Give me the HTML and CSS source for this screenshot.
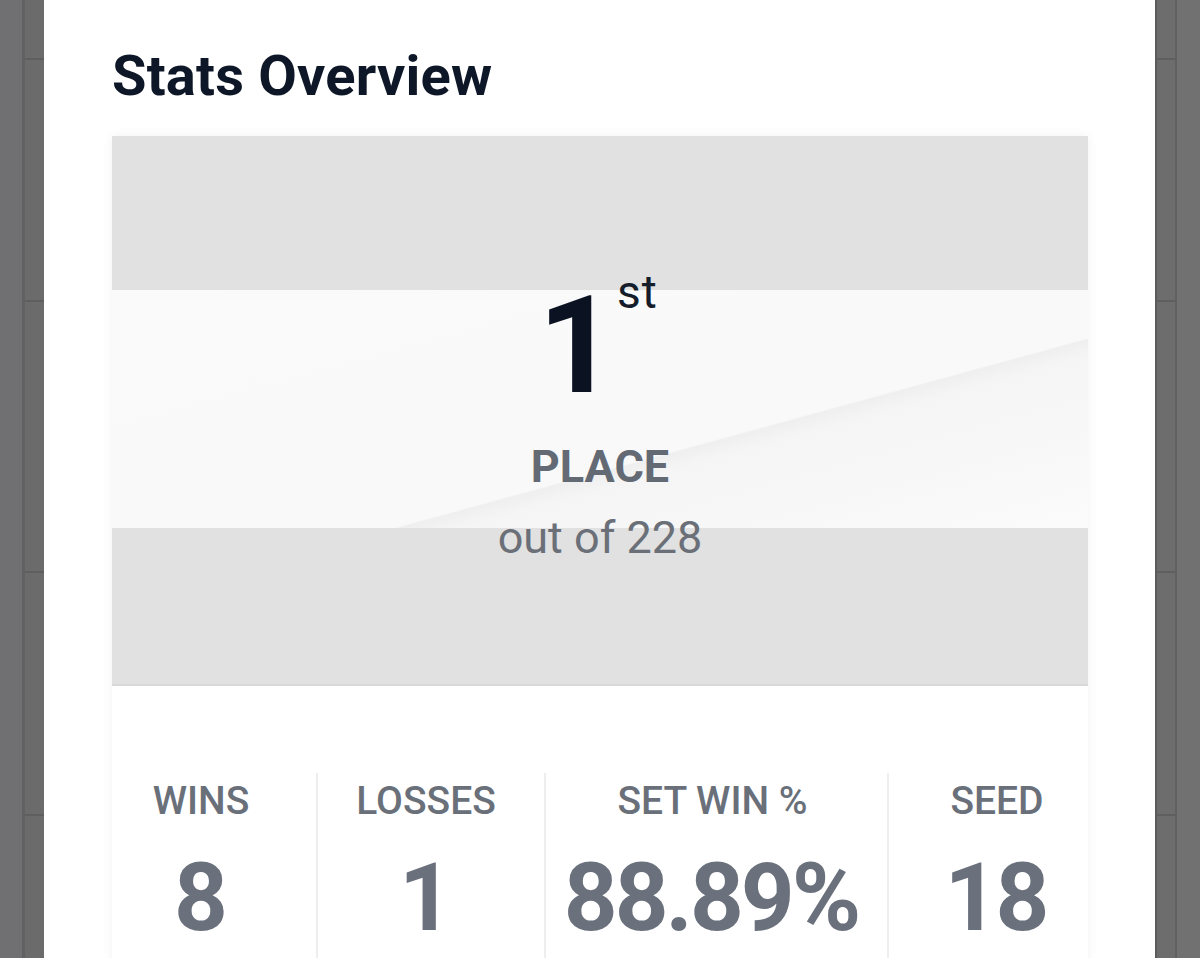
FILE: index.html
```html
<!DOCTYPE html>
<html lang="en">
<head>
<meta charset="utf-8">
<title>Stats Overview</title>
<link rel="stylesheet" href="styles.css">
</head>
<body>
<div class="screen">
  <div class="gutter gutter-left">
    <div class="strip strip-outer"></div>
    <div class="strip strip-inner">
      <div class="seg seg-a"></div>
      <div class="seg seg-b"></div>
      <div class="seg seg-c"></div>
      <div class="seg seg-d"></div>
      <div class="seg seg-e"></div>
    </div>
  </div>

  <main class="panel">
    <h1 class="title">Stats Overview</h1>
    <section class="card">
      <div class="hero">
        <div class="rank">
          <span class="rank-num">1</span>
          <span class="rank-sup">st</span>
        </div>
        <div class="rank-label">PLACE</div>
        <div class="rank-total">out of 228</div>
      </div>
      <div class="stats">
        <div class="stat stat-wins">
          <div class="stat-label">WINS</div>
          <div class="stat-value">8</div>
        </div>
        <div class="stat stat-losses">
          <div class="stat-label">LOSSES</div>
          <div class="stat-value">1</div>
        </div>
        <div class="stat stat-setwin">
          <div class="stat-label">SET WIN %</div>
          <div class="stat-value">88.89%</div>
        </div>
        <div class="stat stat-seed">
          <div class="stat-label">SEED</div>
          <div class="stat-value">18</div>
        </div>
      </div>
    </section>
  </main>

  <div class="gutter gutter-right">
    <div class="strip strip-inner strip-inner-right">
      <div class="seg seg-a"></div>
      <div class="seg seg-b"></div>
      <div class="seg seg-c"></div>
      <div class="seg seg-d"></div>
      <div class="seg seg-e"></div>
    </div>
    <div class="strip strip-outer strip-outer-right"></div>
  </div>
</div>
</body>
</html>
```

FILE: styles.css
```css
* { box-sizing: border-box; }

html, body {
  margin: 0;
  padding: 0;
  height: 100%;
  overflow: hidden;
  background: #6e6e70;
  font-family: Roboto, "Noto Sans", "Liberation Sans", sans-serif;
}

.screen {
  display: flex;
  width: 1200px;
  height: 958px;
  overflow: hidden;
}

/* dimmed background strips */
.gutter {
  display: flex;
  height: 100%;
}
.gutter-left { width: 44px; }
.gutter-right { width: 45px; }

.strip { height: 100%; }
.strip-outer {
  width: 22px;
  background: #707072;
}
.strip-inner {
  width: 22px;
  display: flex;
  flex-direction: column;
  background: #6b6b6b;
  border-left: 3px solid #616161;
}
.strip-inner-right {
  width: 22px;
  background: #6d6d6d;
  border-left: 2px solid #5b5b5b;
  border-right: 2px solid #616161;
}
.strip-outer-right {
  width: 23px;
  background: #717171;
}
.seg { border-bottom: 2px solid #5f5f5f; }
.seg-a { height: 60px; }
.seg-b { height: 242px; }
.seg-c { height: 271px; }
.seg-d { height: 243px; }
.seg-e { flex: 1; border-bottom: 0; }

/* white sheet */
.panel {
  flex: 1;
  background: #ffffff;
  padding: 42px 67px 0 68px;
  overflow: hidden;
}

.title {
  margin: 0 0 26px;
  font-size: 56px;
  line-height: 68px;
  font-weight: 700;
  color: #0e1727;
  letter-spacing: 0.2px;
}

.card {
  width: 976px;
  background: #ffffff;
  box-shadow: 0 0 10px rgba(0, 0, 0, 0.06);
  padding-bottom: 200px;
}

.hero {
  height: 550px;
  padding-top: 142px;
  display: flex;
  flex-direction: column;
  align-items: center;
  border-bottom: 2px solid #d9d9d9;
  background-color: #e1e1e1;
  background-image: linear-gradient(164.7deg, #fafafa 0%, #f9f9f9 62.3%, #efefef 62.7%, #f5f5f5 66%, #fbfbfb 100%);
  background-size: 100% 238px;
  background-position: 0 154px;
  background-repeat: no-repeat;
}

.rank {
  display: flex;
  align-items: flex-start;
  padding-right: 4px;
}
.rank-num {
  font-size: 136px;
  line-height: 136px;
  font-weight: 700;
  color: #0b1322;
}
.rank-sup {
  font-size: 46px;
  line-height: 46px;
  font-weight: 400;
  color: #151d2b;
  margin-top: -9px;
  margin-left: 1px;
  letter-spacing: 1px;
}
.rank-label {
  margin-top: 30px;
  font-size: 45px;
  line-height: 45px;
  font-weight: 700;
  color: #646a74;
}
.rank-total {
  margin-top: 26px;
  font-size: 45px;
  line-height: 45px;
  font-weight: 400;
  color: #6a6f78;
}

.stats {
  display: grid;
  grid-template-columns: 204px 228px 343px 1fr;
  padding-top: 87px;
}
.stat {
  display: flex;
  flex-direction: column;
  align-items: center;
  padding-top: 9px;
  min-height: 200px;
}
.stat + .stat { border-left: 2px solid #eeeef0; }
.stat-wins { padding-right: 26px; }
.stat-losses { padding-right: 10px; }
.stat-setwin { padding-right: 8px; }
.stat-seed { padding-left: 17px; }

.stat-label {
  font-size: 39px;
  line-height: 39px;
  font-weight: 500;
  color: #6a707a;
}
.stat-value {
  margin-top: 30px;
  font-size: 94px;
  line-height: 94px;
  font-weight: 700;
  color: #6b717c;
  letter-spacing: -3px;
  text-indent: -3px;
}
```
